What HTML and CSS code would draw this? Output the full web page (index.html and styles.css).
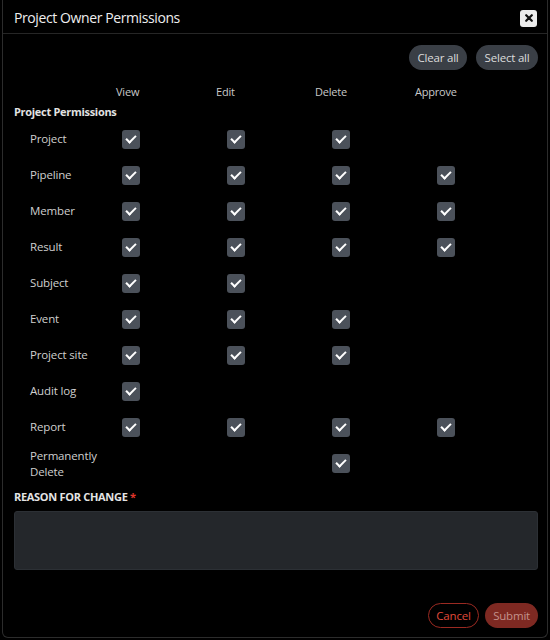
FILE: index.html
```html
<!DOCTYPE html>
<html>
<head>
<meta charset="utf-8">
<link rel="stylesheet" href="styles.css">
</head>
<body>
<div class="modal">
  <div class="modal-header">
    <div class="title">Project Owner Permissions</div>
    <button class="close" aria-label="Close">
      <svg width="8" height="8" viewBox="0 0 8 8"><path d="M1.2 1.2 L6.8 6.8 M6.8 1.2 L1.2 6.8" stroke="#111" stroke-width="2.2" stroke-linecap="round"/></svg>
    </button>
  </div>
  <div class="modal-body">
    <div class="toolbar">
      <button class="pill">Clear all</button>
      <button class="pill">Select all</button>
    </div>
    <div class="col-heads">
      <span>View</span><span>Edit</span><span>Delete</span><span>Approve</span>
    </div>
    <div class="section-title">Project Permissions</div>
    <div class="perm-list">
      <div class="row"><div class="label">Project</div><div class="cell"><span class="cb"></span></div><div class="cell"><span class="cb"></span></div><div class="cell"><span class="cb"></span></div><div class="cell"></div></div>
      <div class="row"><div class="label">Pipeline</div><div class="cell"><span class="cb"></span></div><div class="cell"><span class="cb"></span></div><div class="cell"><span class="cb"></span></div><div class="cell"><span class="cb"></span></div></div>
      <div class="row"><div class="label">Member</div><div class="cell"><span class="cb"></span></div><div class="cell"><span class="cb"></span></div><div class="cell"><span class="cb"></span></div><div class="cell"><span class="cb"></span></div></div>
      <div class="row"><div class="label">Result</div><div class="cell"><span class="cb"></span></div><div class="cell"><span class="cb"></span></div><div class="cell"><span class="cb"></span></div><div class="cell"><span class="cb"></span></div></div>
      <div class="row"><div class="label">Subject</div><div class="cell"><span class="cb"></span></div><div class="cell"><span class="cb"></span></div><div class="cell"></div><div class="cell"></div></div>
      <div class="row"><div class="label">Event</div><div class="cell"><span class="cb"></span></div><div class="cell"><span class="cb"></span></div><div class="cell"><span class="cb"></span></div><div class="cell"></div></div>
      <div class="row"><div class="label">Project site</div><div class="cell"><span class="cb"></span></div><div class="cell"><span class="cb"></span></div><div class="cell"><span class="cb"></span></div><div class="cell"></div></div>
      <div class="row"><div class="label">Audit log</div><div class="cell"><span class="cb"></span></div><div class="cell"></div><div class="cell"></div><div class="cell"></div></div>
      <div class="row"><div class="label">Report</div><div class="cell"><span class="cb"></span></div><div class="cell"><span class="cb"></span></div><div class="cell"><span class="cb"></span></div><div class="cell"><span class="cb"></span></div></div>
      <div class="row"><div class="label">Permanently Delete</div><div class="cell"></div><div class="cell"></div><div class="cell"><span class="cb"></span></div><div class="cell"></div></div>
    </div>
    <div class="reason-label">REASON FOR CHANGE <span class="req">*</span></div>
    <textarea class="reason"></textarea>
    <div class="footer">
      <button class="btn-cancel">Cancel</button>
      <button class="btn-submit">Submit</button>
    </div>
  </div>
</div>
</body>
</html>
```
FILE: styles.css
```css
* { box-sizing: border-box; }
html, body { margin: 0; padding: 0; background: #000; }
body {
  font-family: "Open Sans", "Noto Sans", sans-serif;
  color: #d4d4d4;
  width: 550px;
  height: 640px;
  overflow: hidden;
}
.modal {
  margin: 0 2px;
  height: 638px;
  border: 1px solid #2c2c2c;
  border-top: none;
  border-radius: 0 0 6px 6px;
  background: #000;
  display: flex;
  flex-direction: column;
}
.modal-header {
  height: 34px;
  border-bottom: 1px solid #262626;
  display: flex;
  align-items: center;
  justify-content: space-between;
  padding: 0 10px 0 11px;
}
.title {
  font-size: 14px;
  letter-spacing: -0.4px;
  color: #eeeeee;
  line-height: 20px;
  margin-top: 2px;
}
.close {
  width: 17px;
  height: 17px;
  border: none;
  border-radius: 3px;
  background: #ececec;
  display: flex;
  align-items: center;
  justify-content: center;
  padding: 0;
  margin-top: 3px;
}
.modal-body {
  padding: 11px 9px 0 11px;
  display: flex;
  flex-direction: column;
}
.toolbar {
  display: flex;
  justify-content: flex-end;
  gap: 9px;
}
button { font-family: inherit; }
.pill {
  height: 25px;
  border: none;
  border-radius: 13px;
  background: #3a3f46;
  color: #dcdcdc;
  font-size: 11.5px;
  letter-spacing: -0.2px;
  padding: 0 8.5px;
}
.col-heads {
  display: grid;
  grid-template-columns: 100px 99px 100px 100px;
  padding-left: 102px;
  margin-top: 14px;
  font-size: 11px;
  letter-spacing: -0.2px;
  line-height: 16px;
  color: #c8c8c8;
}
.section-title {
  margin-top: 4px;
  font-size: 11px;
  letter-spacing: -0.3px;
  line-height: 16px;
  font-weight: 700;
  color: #e2e2e2;
}
.perm-list { display: flex; flex-direction: column; margin-top: 1px; }
.row {
  display: grid;
  grid-template-columns: 92px 105px 105px 105px 105px;
  padding-left: 16px;
  height: 36px;
  align-items: center;
}
.label {
  font-size: 11.5px;
  letter-spacing: -0.15px;
  line-height: 16px;
  color: #cfcfcf;
  padding-right: 10px;
}
.row:last-child .label { margin-top: 2px; }
.cell { display: flex; align-items: center; }
.cb {
  width: 18px;
  height: 19px;
  border-radius: 3px;
  background: #4b515a;
  display: inline-block;
  position: relative;
}
.cb::after {
  content: "";
  position: absolute;
  left: 6px;
  top: 3.5px;
  width: 4px;
  height: 8px;
  border: solid #fff;
  border-width: 0 2.5px 2.5px 0;
  transform: rotate(45deg);
}
.reason-label {
  margin-top: 8px;
  font-size: 11px;
  line-height: 16px;
  font-weight: 700;
  color: #e4e4e4;
  letter-spacing: -0.3px;
}
.req { color: #e0362c; }
.reason {
  margin-top: 6px;
  height: 59px;
  width: 100%;
  background: #24272b;
  border: 1px solid #2c3035;
  border-radius: 3px;
  resize: none;
}
.footer {
  margin-top: 33px;
  display: flex;
  justify-content: flex-end;
  gap: 6px;
}
.btn-cancel {
  height: 25px;
  border: 1px solid #9b2a22;
  border-radius: 13px;
  background: transparent;
  color: #e04a3a;
  font-size: 11.5px;
  letter-spacing: -0.2px;
  padding: 0 7.5px;
}
.btn-submit {
  height: 25px;
  border: none;
  border-radius: 13px;
  background: #7e2922;
  color: #c3928c;
  font-size: 11.5px;
  letter-spacing: -0.2px;
  padding: 0 8px;
}
```
